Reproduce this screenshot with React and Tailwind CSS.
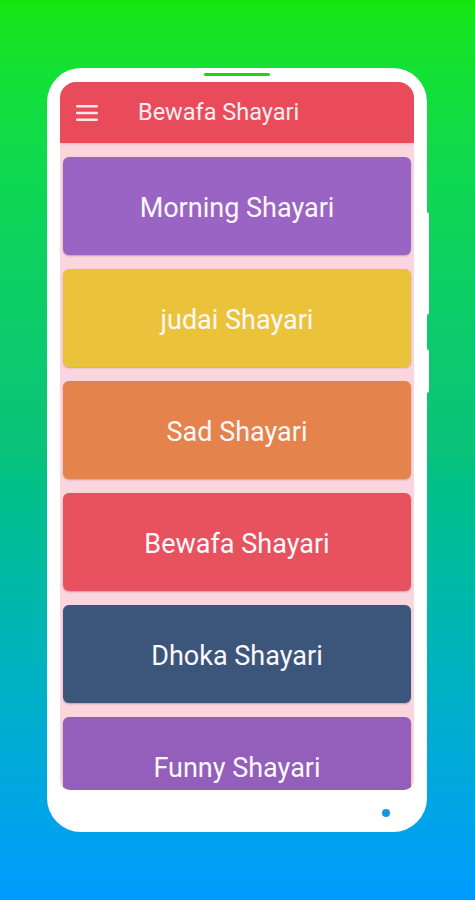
import React from 'react';

const items = [
  { title: 'Morning Shayari', color: 'bg-[#9a64c5]' },
  { title: 'judai Shayari', color: 'bg-[#ebc33a]' },
  { title: 'Sad Shayari', color: 'bg-[#e4834b]' },
  { title: 'Bewafa Shayari', color: 'bg-[#e8525f]' },
  { title: 'Dhoka Shayari', color: 'bg-[#3c567b]' },
  { title: 'Funny Shayari', color: 'bg-[#935fbb]' },
];

const App = () => {
  return (
    <div
      className="w-[475px] h-[900px] overflow-hidden bg-gradient-to-b from-[#16e60a] via-[#0bc27a] to-[#009afe] pt-[68px] pl-[47px]"
      style={{ fontFamily: 'Roboto, "Noto Sans", sans-serif' }}
    >
      <div className="relative w-[380px] h-[764px] bg-white rounded-[34px] pt-[14px] px-[13px] flex flex-col">
        {/* speaker line */}
        <div className="absolute top-[5px] left-[157px] w-[66px] h-[3px] rounded-full bg-[#1cd60f]" />
        {/* side buttons */}
        <div className="absolute -right-[2px] top-[144px] w-[3px] h-[103px] rounded-r bg-white" />
        <div className="absolute -right-[2px] top-[281px] w-[3px] h-[44px] rounded-r bg-white" />

        <div className="w-[354px] h-[708px] shrink-0 rounded-t-[16px] rounded-b-[10px] overflow-hidden bg-[#fcd6df] flex flex-col">
          <div className="h-[61px] shrink-0 bg-[#ea4b5b] flex items-center shadow-sm">
            <svg width="22" height="16" viewBox="0 0 22 16" className="ml-[16px]">
              <rect x="0" y="0" width="22" height="2.6" rx="1" fill="#fde7ea" />
              <rect x="0" y="6.7" width="22" height="2.6" rx="1" fill="#fde7ea" />
              <rect x="0" y="13.4" width="22" height="2.6" rx="1" fill="#fde7ea" />
            </svg>
            <span className="ml-[40px] text-[23.5px] text-[#fdeef0]">Bewafa Shayari</span>
          </div>
          <div className="flex flex-col gap-[14px] px-[3px] pt-[14px]">
            {items.map(it => (
              <div
                key={it.title}
                className={`${it.color} h-[98px] shrink-0 rounded-[6px] flex items-center justify-center pt-[4px] text-[#fdf8fb] text-[27px] font-normal shadow-[0_1px_2px_rgba(0,0,0,0.25)]`}
              >
                {it.title}
              </div>
            ))}
          </div>
        </div>
        <div className="flex-1 flex items-center justify-end pt-[4px] pr-[24px]">
          <div className="w-[8px] h-[8px] rounded-full bg-[#1495e2]" />
        </div>
      </div>
    </div>
  );
};

export default App;
